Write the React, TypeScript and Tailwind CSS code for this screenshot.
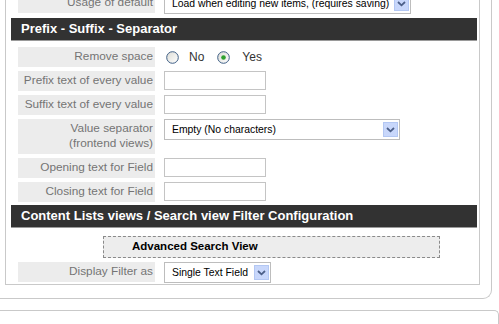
import React from "react";

const Arrow = () => (
  <div className="ml-auto mr-[1px] flex h-[15px] w-[15px] shrink-0 items-center justify-center border border-[#b3c7f3] bg-[#c8d7fb]">
    <svg width="9" height="6" viewBox="0 0 9 6">
      <path d="M1 1 L4.5 4.3 L8 1" stroke="#4c5f88" strokeWidth="1.8" fill="none" />
    </svg>
  </div>
);

const Label = ({ children, tall }: { children: React.ReactNode; tall?: boolean }) => (
  <div
    className={
      tall
        ? "flex h-[35px] w-[137px] shrink-0 flex-col items-end justify-start bg-[#ececec] pr-[2px] pt-[2px] text-[11.8px] leading-[15px] text-[#747474]"
        : "flex h-[20px] w-[137px] shrink-0 items-center justify-end bg-[#ececec] pr-[2px] text-[11.8px] text-[#747474]"
    }
  >
    {children}
  </div>
);

const Input = () => <div className="h-[19px] w-[102px] border border-[#c4c4c4] bg-white" />;

const Row = ({ children }: { children: React.ReactNode }) => (
  <div className="flex items-start gap-[9px] pl-[12px]">{children}</div>
);

const Header = ({ children }: { children: React.ReactNode }) => (
  <div className="ml-[5px] flex h-[23px] w-[466px] items-center border-b border-[#9a9a9a] bg-[#323232] pl-[10px] text-[13px] font-bold text-white">
    {children}
  </div>
);

const Radio = ({ checked }: { checked?: boolean }) => (
  <svg width="13" height="13" viewBox="0 0 13 13">
    <defs>
      <linearGradient id={checked ? "rg1" : "rg2"} x1="0" y1="0" x2="1" y2="1">
        <stop offset="0" stopColor="#dcdcd6" />
        <stop offset="1" stopColor="#ffffff" />
      </linearGradient>
    </defs>
    <circle cx="6.5" cy="6.5" r="5.8" fill={`url(#${checked ? "rg1" : "rg2"})`} stroke="#3f5f86" strokeWidth="1" />
    {checked && <circle cx="6.5" cy="6.5" r="2.3" fill="#2fa12f" />}
  </svg>
);

export default function App() {
  return (
    <div className="h-[324px] w-[499px] overflow-hidden bg-white text-black [font-family:'Liberation_Sans',Arial,sans-serif]">
      <div className="-mt-[35px] flex flex-col">
        {/* outer box */}
        <div className="-ml-px w-[493px] rounded-br-[9px] border-r border-b border-[#c9c9c9] pb-[13px]">
          {/* inner panel */}
          <div className="ml-[6px] flex w-[475px] flex-col border border-[#c9c9c9] pb-[1px] pt-[3px]">
            <div className="h-[20px]" />
            {/* Row 0 */}
            <div className="mt-[4px]">
              <Row>
                <Label>Usage of default</Label>
                <div className="flex h-[21px] w-[247px] items-center border border-[#bdbdbd] bg-white pl-[7px] text-[10.4px]">
                  <span>Load when editing new items, (requires saving)</span>
                  <Arrow />
                </div>
              </Row>
            </div>
            <div className="mt-[4px]">
              <Header>Prefix - Suffix - Separator</Header>
            </div>
            <div className="mt-[6px]">
              <Row>
                <Label>Remove space</Label>
                <div className="flex h-[20px] items-center pl-[2px] text-[12px] text-[#333]">
                  <Radio />
                  <span className="ml-[10px]">No</span>
                  <span className="ml-[13px] flex items-center">
                    <Radio checked />
                  </span>
                  <span className="ml-[12px]">Yes</span>
                </div>
              </Row>
            </div>
            <div className="mt-[4px]">
              <Row>
                <Label>Prefix text of every value</Label>
                <Input />
              </Row>
            </div>
            <div className="mt-[4px]">
              <Row>
                <Label>Suffix text of every value</Label>
                <Input />
              </Row>
            </div>
            <div className="mt-[4px]">
              <Row>
                <Label tall>
                  <span>Value separator</span>
                  <span>(frontend views)</span>
                </Label>
                <div className="flex h-[21px] w-[236px] items-center border border-[#bdbdbd] bg-white pl-[7px] text-[10.4px]">
                  <span>Empty (No characters)</span>
                  <Arrow />
                </div>
              </Row>
            </div>
            <div className="mt-[4px]">
              <Row>
                <Label>Opening text for Field</Label>
                <Input />
              </Row>
            </div>
            <div className="mt-[4px]">
              <Row>
                <Label>Closing text for Field</Label>
                <Input />
              </Row>
            </div>
            <div className="mt-[3px]">
              <Header>Content Lists views / Search view Filter Configuration</Header>
            </div>
            <div className="ml-[97px] mt-[8px] flex h-[22px] w-[337px] items-center border border-dashed border-[#8a8a8a] bg-[#ededed] pl-[28px] text-[11.5px] font-bold">
              Advanced Search View
            </div>
            <div className="mt-[4px]">
              <Row>
                <Label>Display Filter as</Label>
                <div className="flex h-[21px] w-[107px] items-center border border-[#bdbdbd] bg-white pl-[7px] text-[10.4px]">
                  <span>Single Text Field</span>
                  <Arrow />
                </div>
              </Row>
            </div>
          </div>
        </div>
        {/* lower box */}
        <div className="-ml-px mt-[11px] h-[30px] w-[500px] rounded-tr-[5px] border-t border-r border-[#c9c9c9]" />
      </div>
    </div>
  );
}
